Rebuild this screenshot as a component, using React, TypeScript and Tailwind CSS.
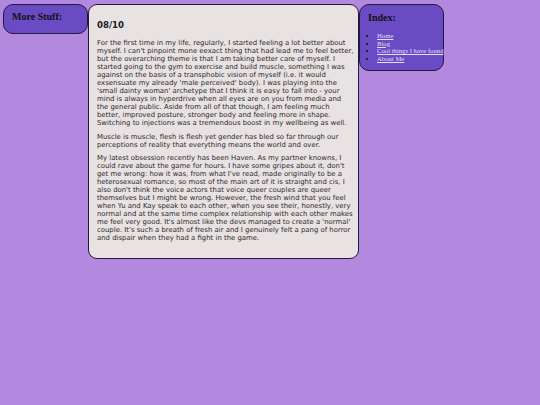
import React from 'react';

const paragraphs = [
  "For the first time in my life, regularly, I started feeling a lot better about myself. I can't pinpoint mone eexact thing that had lead me to feel better, but the overarching theme is that I am taking better care of myself. I started going to the gym to exercise and build muscle, something I was against on the basis of a transphobic vision of myself (i.e. it would exsensuate my already 'male perceived' body). I was playing into the 'small dainty woman' archetype that I think it is easy to fall into - your mind is always in hyperdrive when all eyes are on you from media and the general public. Aside from all of that though, I am feeling much better, improved posture, stronger body and feeling more in shape. Switching to injections was a tremendous boost in my wellbeing as well.",
  "Muscle is muscle, flesh is flesh yet gender has bled so far through our perceptions of reality that everything means the world and over.",
  "My latest obsession recently has been Haven. As my partner knowns, I could rave about the game for hours. I have some gripes about it, don't get me wrong: how it was, from what I've read, made originally to be a heterosexual romance, so most of the main art of it is straight and cis, I also don't think the voice actors that voice queer couples are queer themselves but I might be wrong. However, the fresh wind that you feel when Yu and Kay speak to each other, when you see their, honestly, very normal and at the same time complex relationship with each other makes me feel very good. It's almost like the devs managed to create a 'normal' couple. It's such a breath of fresh air and I genuinely felt a pang of horror and dispair when they had a fight in the game.",
];

const links = ['Home', 'Blog', 'Cool things I have found', 'About Me'];

export default function App() {
  return (
    <div className="min-h-[405px] w-full bg-[#b389e0] flex items-start pt-[4px] pl-[3px]">
      {/* left side box */}
      <div className="w-[85px] h-[30px] shrink-0 bg-[#6a4bc4] border border-[#221a38] rounded-[10px] pl-[8px] pt-[6px]">
        <h2 className="font-['Liberation_Serif',serif] font-bold text-[10px] leading-[12px] text-[#111]">
          More Stuff:
        </h2>
      </div>

      {/* main post */}
      <div className="w-[271px] shrink-0 bg-[#e8e2e3] border border-[#221a38] rounded-[9px] pl-[8px] pr-[4px] pt-[15px] pb-[10px]">
        <h1 className="font-['DejaVu_Sans',sans-serif] font-bold text-[8.6px] leading-[10px] text-[#1a1a1a] mb-[9px]">
          08/10
        </h1>
        {paragraphs.map((p, i) => (
          <p
            key={i}
            className="font-['DejaVu_Sans',sans-serif] text-[6.9px] leading-[8px] text-[#2a2a2a] mb-[5.7px]"
          >
            {p}
          </p>
        ))}
      </div>

      {/* index box */}
      <div className="w-[85px] shrink-0 bg-[#6a4bc4] border border-[#221a38] rounded-[10px] pl-[8px] pt-[7px] pb-[8px]">
        <h2 className="font-['Liberation_Serif',serif] font-bold text-[10px] leading-[12px] text-[#111] mb-[8px]">
          Index:
        </h2>
        <ul className="list-disc pl-[9px] font-['Liberation_Serif',serif] text-[6.7px] leading-[7.5px] whitespace-nowrap">
          {links.map((l) => (
            <li key={l} className="text-[#111]">
              <a href="#" className="underline text-[#e4def5]">
                {l}
              </a>
            </li>
          ))}
        </ul>
      </div>
    </div>
  );
}
